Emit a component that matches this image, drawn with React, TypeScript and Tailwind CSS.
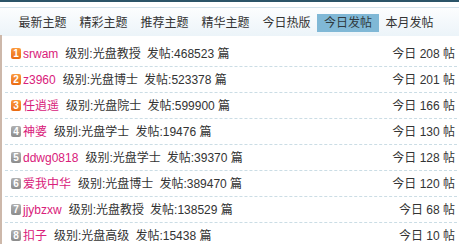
import React from "react";

const tabs = ["最新主题", "精彩主题", "推荐主题", "精华主题", "今日热版", "今日发帖", "本月发帖"];

const rows = [
  { name: "srwam", level: "光盘教授", posts: "468523", today: "208" },
  { name: "z3960", level: "光盘博士", posts: "523378", today: "201" },
  { name: "任逍遥", level: "光盘院士", posts: "599900", today: "166" },
  { name: "神婆", level: "光盘学士", posts: "19476", today: "130" },
  { name: "ddwg0818", level: "光盘学士", posts: "39370", today: "128" },
  { name: "爱我中华", level: "光盘博士", posts: "389470", today: "120" },
  { name: "jjybzxw", level: "光盘教授", posts: "138529", today: "68" },
  { name: "扣子", level: "光盘高级", posts: "15438", today: "10" },
];

const App = () => {
  return (
    <div
      className="w-[459px] h-[244px] overflow-hidden bg-white text-[12px] text-[#333]"
      style={{ fontFamily: '"Liberation Sans", Arial, "Noto Sans CJK SC", sans-serif' }}
    >
      <div className="h-[2px] bg-[#2b5468]" />
      <div className="h-[5px] bg-white" />
      {/* tab bar */}
      <div className="h-[29px] border-t border-[#d3e1ea] bg-gradient-to-b from-[#fcfdfe] to-[#ecf4f9] pl-[12px] pt-[6px] flex">
        {tabs.map((t, i) => (
          <div
            key={t}
            className={
              i === 5
                ? "w-[62px] h-[18px] leading-[18px] text-center bg-[#80b8d6] text-[#2f3a40]"
                : "w-[61px] h-[18px] leading-[18px] text-center"
            }
          >
            {t}
          </div>
        ))}
      </div>

      {/* list */}
      <div className="flex">
        <div className="w-[2px] bg-[#cdb8aa] h-[220px] mt-[-1px]" />
        <div className="flex-1 pt-[5px] pl-[3px] pr-[2px]">
          {rows.map((r, i) => (
            <div
              key={r.name}
              className="h-[26px] flex items-center border-b border-dashed border-[#cbdde5] pl-[6px] pr-[2px]"
            >
              <span
                className={
                  i < 3
                    ? "w-[10px] h-[11px] rounded-[2px] bg-gradient-to-b from-[#fb9a3c] to-[#ea6a10] text-white text-[10px] font-bold leading-[11px] text-center mr-[2px]"
                    : "w-[10px] h-[11px] rounded-[2px] bg-gradient-to-b from-[#b0b0b0] to-[#8c8c8c] text-white text-[10px] font-bold leading-[11px] text-center mr-[2px]"
                }
              >
                {i + 1}
              </span>
              <span className="text-[#d9207a]">{r.name}</span>
              <span className="ml-[7px]">级别:{r.level}</span>
              <span className="ml-[6px]">发帖:{r.posts} 篇</span>
              <span className="ml-auto">今日 {r.today} 帖</span>
            </div>
          ))}
        </div>
      </div>
    </div>
  );
};

export default App;
